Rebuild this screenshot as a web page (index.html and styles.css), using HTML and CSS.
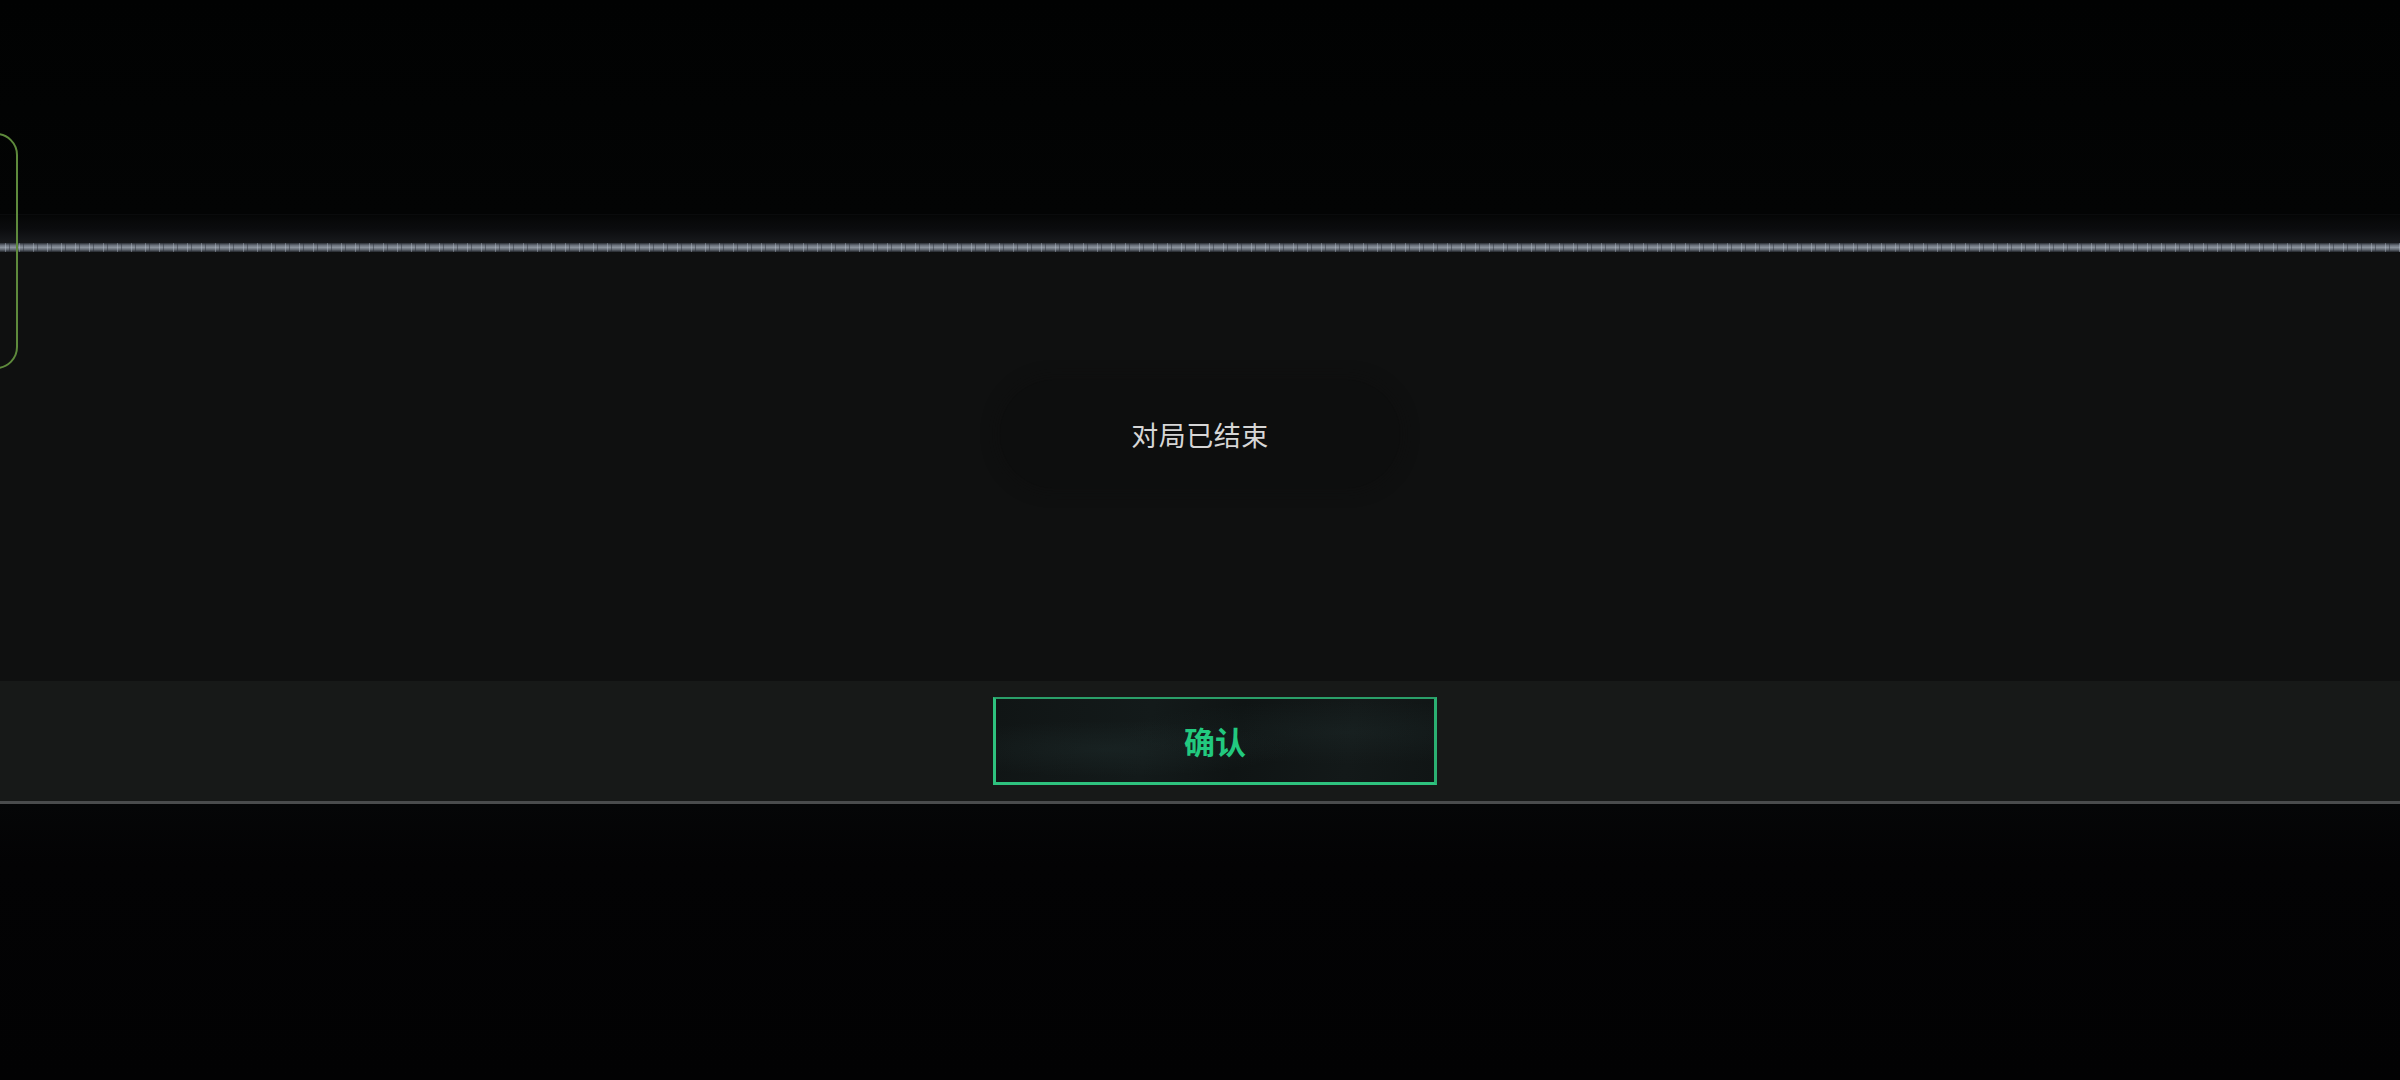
FILE: index.html
```html
<!DOCTYPE html>
<html lang="zh-CN">
<head>
<meta charset="utf-8">
<title>对局已结束</title>
<link rel="stylesheet" href="styles.css">
</head>
<body>
<div class="screen">
  <div class="top-space"></div>
  <div class="header-strip">
    <div class="strip-fade"></div>
    <div class="strip-line"></div>
  </div>
  <div class="panel">
    <div class="toast">
      <span class="toast-text">对局已结束</span>
    </div>
  </div>
  <div class="footer">
    <button class="confirm-btn" type="button">
      <span class="btn-label">确认</span>
    </button>
  </div>
  <div class="footer-line"></div>
  <div class="bottom-space"></div>
  <div class="side-frame"></div>
</div>
</body>
</html>
```

FILE: styles.css
```css
html, body {
  margin: 0;
  padding: 0;
  background: #020303;
  width: 2400px;
  height: 1080px;
  overflow: hidden;
  font-family: "Noto Sans CJK SC", "Noto Sans", sans-serif;
}

.screen {
  position: relative;
  width: 2400px;
  height: 1080px;
  display: flex;
  flex-direction: column;
  background: #020303;
}

.top-space {
  height: 214px;
  flex: none;
  background: linear-gradient(to bottom, #010202 0%, #030404 100%);
}

.header-strip {
  height: 38px;
  flex: none;
  display: flex;
  flex-direction: column;
}

.strip-fade {
  height: 28px;
  border-top: 1px solid #0a0b0c;
  background: linear-gradient(to bottom, #050606 0%, #0b0c0e 50%, #181a1d 100%);
}

.strip-line {
  height: 9px;
  background:
    repeating-linear-gradient(to right,
      rgba(255,255,255,0) 0px, rgba(255,255,255,0) 5px,
      rgba(200,210,225,0.35) 5px, rgba(200,210,225,0.35) 6px,
      rgba(255,255,255,0) 6px, rgba(255,255,255,0) 9px,
      rgba(40,45,55,0.45) 9px, rgba(40,45,55,0.45) 10px,
      rgba(255,255,255,0) 10px, rgba(255,255,255,0) 14px),
    linear-gradient(to bottom, #2a2e34 0%, #6a717b 25%, #8a929c 50%, #5f666f 75%, #22252a 100%);
}

.panel {
  height: 429px;
  flex: none;
  background: #0f1010;
  display: flex;
  justify-content: center;
  align-items: flex-start;
  padding-top: 128px;
  box-sizing: border-box;
}

.toast {
  width: 400px;
  height: 108px;
  border-radius: 54px;
  background: #0d0e0e;
  box-shadow: 0 0 14px 4px rgba(13,14,14,0.5);
  display: flex;
  align-items: center;
  justify-content: center;
}

.toast-text {
  color: #d6d6d6;
  font-size: 27px;
  font-weight: 400;
  letter-spacing: 0.5px;
  line-height: 1;
}

.footer {
  height: 120px;
  flex: none;
  background: #171918;
  display: flex;
  align-items: center;
  justify-content: center;
  padding-left: 30px;
  box-sizing: border-box;
}

.confirm-btn {
  width: 444px;
  height: 88px;
  margin: 0;
  padding: 0;
  box-sizing: border-box;
  border-style: solid;
  border-color: #2a9f69 #2bb072 #2ec27e #2ec27e;
  border-width: 2px 3px 3px 3px;
  background:
    radial-gradient(ellipse at 25% 60%, rgba(40,60,60,0.25) 0%, rgba(0,0,0,0) 40%),
    radial-gradient(ellipse at 80% 40%, rgba(40,60,60,0.2) 0%, rgba(0,0,0,0) 45%),
    linear-gradient(100deg, #101515 0%, #131a1a 35%, #0f1414 55%, #131919 80%, #101515 100%);
  display: flex;
  align-items: center;
  justify-content: center;
  font-family: "Noto Sans CJK SC", "Noto Sans", sans-serif;
}

.btn-label {
  color: #22c97f;
  font-size: 31px;
  font-weight: 700;
  line-height: 1;
}

.footer-line {
  height: 3px;
  flex: none;
  background: #4a4c4d;
}

.bottom-space {
  flex: 1;
  background: linear-gradient(to bottom, #050607 0%, #030304 60px, #020203 100%);
}

.side-frame {
  position: absolute;
  left: -60px;
  top: 133px;
  width: 78px;
  height: 236px;
  border: 2px solid #5e8a3c;
  border-radius: 22px;
  box-sizing: border-box;
}
```
